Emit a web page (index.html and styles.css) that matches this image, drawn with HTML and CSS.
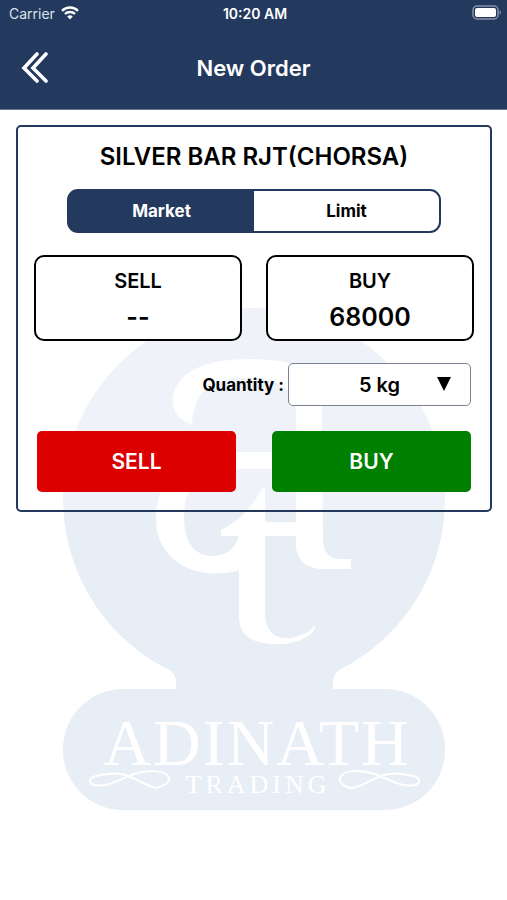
FILE: index.html
```html
<!DOCTYPE html>
<html lang="en">
<head>
    <meta charset="UTF-8">
    <meta name="viewport" content="width=device-width, initial-scale=1.0">
    <title>New Order</title>
    <link rel="stylesheet" href="styles.css">
</head>
<body>
    <header class="header">
        <div class="status">
            <div class="status__carrier">
                <span>Carrier</span>
                <svg width="18" height="14" viewBox="0 0 18 14" fill="none" stroke="#fff" stroke-width="2.4">
                    <path d="M1 4.8a11.5 11.5 0 0 1 16 0"/>
                    <path d="M3.9 8a7.4 7.4 0 0 1 10.2 0"/>
                    <path d="M9 13.5L6.2 10.6a4.2 4.2 0 0 1 5.6 0z" fill="#fff" stroke="none"/>
                </svg>
            </div>
            <time class="status__time">10:20 AM</time>
            <div class="status__battery">
                <svg width="31" height="16" viewBox="0 0 31 16">
                    <rect x="3" y="1" width="25" height="13" rx="4" fill="none" stroke="#8791a8" stroke-width="1.5"/>
                    <rect x="5" y="3" width="21" height="9" rx="2" fill="#fff"/>
                    <path d="M29.5 5.500c2 .8 2 3.2 0 4z" fill="#8791a8"/>
                </svg>
            </div>
        </div>
        <div class="navbar">
            <button class="navbar__back" type="button" aria-label="Back">
                <svg width="28" height="32" viewBox="0 0 28 32" fill="none" stroke="#fff" stroke-width="3.6" stroke-linecap="round">
                    <path d="M17 2L4 16l13 13"/>
                    <path d="M26 2L13 16l13 13"/>
                </svg>
            </button>
            <h1 class="navbar__title">New Order</h1>
        </div>
    </header>

    <main class="main">
        <svg class="watermark" width="384" height="504" viewBox="62 307 384 504" role="img" aria-label="Adinath Trading">
            <g fill="#e8eef6">
                <circle cx="254" cy="499" r="191"/>
                <path d="M156 662q20 8 20 20v10h157v-10q0-12 20-20z"/>
                <rect x="63" y="689" width="382" height="121" rx="60"/>
            </g>
            <path fill="#fff" d="M192 425C174 419 170 404 174 392C182 369 207 360 248 359C292 358 322 370 322 406L323 540C323 553 331 559 339 559L351 559V569H326C305 570 296 558 296 545V536H265V612C265 633 276 639 290 638C302 636 310 632 315 625Q316 629 312 633C302 641 289 645 271 644C249 643 239 633 239 616V570C228 574 215 574 206 573C175 569 156 547 156 519C156 477 185 452 230 452H272V469H230C198 470 184 488 184 517C184 541 194 556 212 556C225 556 236 549 239 536H221V530C243 519 253 505 263 487L265 489V522H296V412C296 388 275 377 243 378C206 379 193 396 192 425Z"/>
            <g class="watermark__text">
                <text class="watermark__name" x="257" y="765">ADINATH</text>
                <text class="watermark__sub" x="258" y="793">TRADING</text>
            </g>
            <g fill="none" stroke="#fff" stroke-width="2">
                <path d="M90 782C88 777 98 775 108 774C128 771 138 783 156 788C164 786 170 783 169 778C166 769 146 770 134 774C120 779 108 788 94 785Q91 784 90 782Z"/>
                <path d="M419 782C421 777 411 775 401 774C381 771 371 783 353 788C345 788 339 783 340 778C343 769 363 770 375 774C389 779 401 788 415 785Q418 784 419 782Z"/>
            </g>
        </svg>

        <form class="order">
            <h2 class="order__title">SILVER BAR RJT(CHORSA)</h2>
            <div class="tabs">
                <button class="tabs__item tabs__item--active" type="button">Market</button>
                <button class="tabs__item" type="button">Limit</button>
            </div>
            <div class="prices">
                <div class="price">
                    <span class="price__label">SELL</span>
                    <span class="price__value">--</span>
                </div>
                <div class="price">
                    <span class="price__label">BUY</span>
                    <span class="price__value">68000</span>
                </div>
            </div>
            <div class="quantity">
                <label class="quantity__label" for="cantidad">Quantity :</label>
                <div class="quantity__field">
                    <select class="quantity__select" id="cantidad">
                        <option>5 kg</option>
                    </select>
                    <svg class="quantity__arrow" width="14" height="14" viewBox="0 0 14 14">
                        <path d="M0 0h14L7 14z"/>
                    </svg>
                </div>
            </div>
            <div class="actions">
                <button class="actions__btn actions__btn--sell" type="button">SELL</button>
                <button class="actions__btn actions__btn--buy" type="button">BUY</button>
            </div>
        </form>
    </main>
</body>
</html>
```
FILE: styles.css
```css
* { margin: 0; padding: 0; box-sizing: border-box; }
body {
    font-family: Inter, "Liberation Sans", sans-serif;
    background: #fff;
    color: #000;
}
button, select {
    font-family: inherit;
    color: inherit;
}
svg {
    display: block;
}
.header {
    height: 110px;
    background: #24395e;
    border-bottom: 1px solid #6b7890;
    color: #fff;
}
.status {
    display: grid;
    grid-template-columns: 1fr auto 1fr;
    align-items: center;
    height: 26px;
    padding: 0 6px 0 9px;
    font-size: 14px;
}
.status__carrier {
    display: flex;
    align-items: center;
    gap: 6px;
    color: #dde2ea;
}
.status__time {
    font-weight: 600;
}
.status__battery {
    display: flex;
    justify-content: flex-end;
}
.navbar {
    display: grid;
    grid-template-columns: 32px 1fr 32px;
    align-items: center;
    height: 84px;
    padding: 0 20px;
}
.navbar__back {
    border: none;
    background: none;
}
.navbar__title {
    font-size: 22px;
    font-weight: 600;
    text-align: center;
}
.main {
    position: relative;
    padding: 15px 15px 16px 16px;
    min-height: 704px;
}
/* logo behind the order card */
.watermark {
    position: absolute;
    top: 197px;
    left: 50%;
    transform: translateX(-50%);
}
.watermark__text {
    fill: #fff;
    font-family: "Liberation Serif", serif;
    text-anchor: middle;
}
.watermark__name {
    font-size: 66px;
    letter-spacing: 2px;
}
.watermark__sub {
    font-size: 26px;
    letter-spacing: 4px;
}
.order {
    position: relative;
    border: 2px solid #24395e;
    border-radius: 5px;
    background: rgba(255, 255, 255, 0.3);
    padding: 14px 16px 18px;
}
.order__title {
    font-size: 24px;
    font-weight: 600;
    line-height: 32px;
    text-align: center;
}
.tabs {
    display: flex;
    width: 85%;
    height: 44px;
    margin: 16px auto 0;
    border: 2px solid #24395e;
    border-radius: 11px;
    overflow: hidden;
    background: linear-gradient(to right, #24395e 50%, #fff 50%);
}
.tabs__item {
    flex: 1;
    border: none;
    background: none;
    font-size: 17px;
    font-weight: 700;
}
.tabs__item--active {
    color: #fff;
}
.prices {
    display: flex;
    gap: 24px;
    margin-top: 22px;
}
.price {
    flex: 1;
    display: flex;
    flex-direction: column;
    align-items: center;
    height: 86px;
    padding-top: 8px;
    border: 2px solid #000;
    border-radius: 10px;
    background: #fff;
    font-weight: 600;
}
.price__label {
    font-size: 20px;
    line-height: 32px;
}
.price__value {
    font-size: 25px;
    line-height: 40px;
}
.quantity {
    display: flex;
    justify-content: flex-end;
    align-items: center;
    gap: 4px;
    margin-top: 22px;
    padding-right: 3px;
}
.quantity__label {
    font-size: 17px;
    font-weight: 700;
}
.quantity__field {
    position: relative;
    width: 183px;
}
.quantity__select {
    appearance: none;
    display: block;
    width: 100%;
    height: 43px;
    border: 1px solid #7c8096;
    border-radius: 5px;
    background: #fff;
    font-size: 20px;
    font-weight: 600;
    text-align: center;
    text-align-last: center;
}
.quantity__arrow {
    position: absolute;
    top: 14px;
    right: 20px;
    pointer-events: none;
}
.actions {
    display: flex;
    gap: 36px;
    margin-top: 25px;
    padding: 0 3px;
}
.actions__btn {
    flex: 1;
    height: 61px;
    border: none;
    border-radius: 5px;
    color: #fff;
    font-size: 21px;
    font-weight: 600;
}
.actions__btn--sell {
    background: #dc0000;
}
.actions__btn--buy {
    background: #008000;
}
```
